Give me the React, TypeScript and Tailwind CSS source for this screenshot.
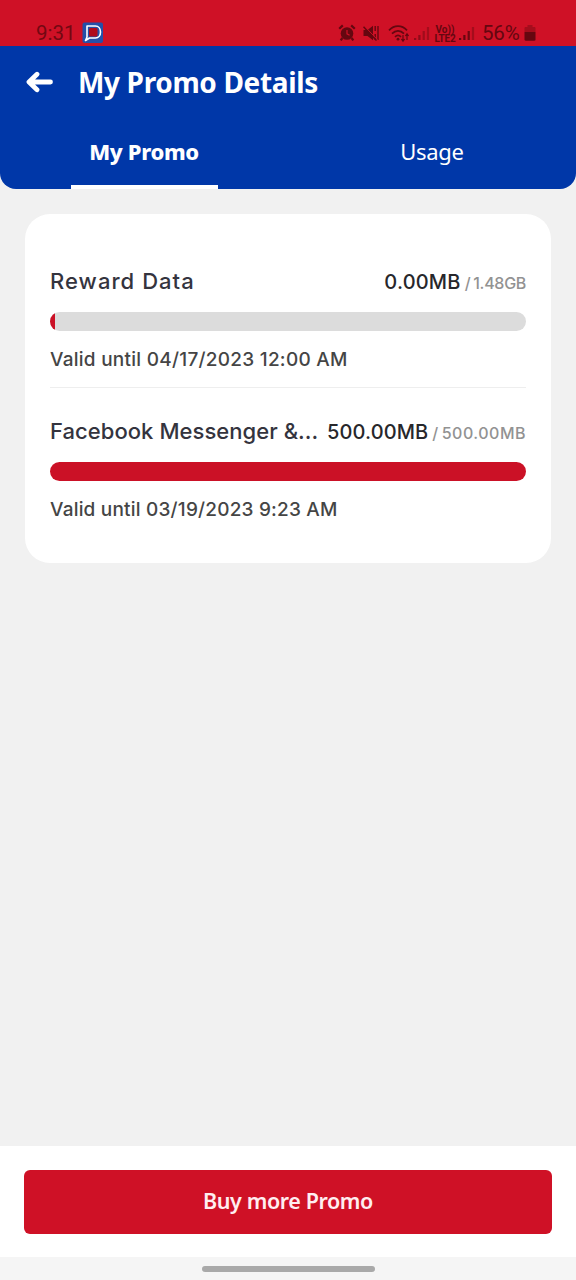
import { useState } from 'react';

type Promo = {
  name: string;
  used: string;
  total: string;
  percent: number;
  expiry: string;
  nameClass: string;
  usedClass: string;
  totalClass: string;
  expiryClass: string;
};

const promos: Promo[] = [
  {
    name: 'Reward Data',
    used: '0.00MB',
    total: '1.48GB',
    percent: 1.1,
    expiry: 'Valid until 04/17/2023 12:00 AM',
    nameClass: 'tracking-[1.05px]',
    usedClass: 'tracking-[0.2px]',
    totalClass: 'tracking-[-0.3px]',
    expiryClass: 'tracking-[0.26px]',
  },
  {
    name: 'Facebook Messenger &...',
    used: '500.00MB',
    total: '500.00MB',
    percent: 100,
    expiry: 'Valid until 03/19/2023 9:23 AM',
    nameClass: 'tracking-[0.05px]',
    usedClass: 'tracking-[0.1px]',
    totalClass: 'tracking-[0.5px]',
    expiryClass: 'tracking-[0.2px]',
  },
];

function AlarmIcon() {
  return (
    <svg width="18" height="18" viewBox="0 0 18 18" fill="currentColor">
      <circle cx="9" cy="9.5" r="6.3" />
      <path d="M1.2 4.8 4.8 1.4M16.8 4.8l-3.6-3.4M4.4 14l-1.7 2.4M13.6 14l1.7 2.4" stroke="currentColor" strokeWidth="2.2" />
      <path d="M9 6v3.8l2.6 1.4" fill="none" stroke="#cf1126" strokeWidth="1.2" />
    </svg>
  );
}

function MuteIcon() {
  return (
    <svg width="18" height="18" viewBox="0 0 18 18" fill="currentColor">
      <path d="M1.5 6h4L11 1.8v14.4L5.5 12h-4z" />
      <path d="M13.2 2v5M13.2 10v6M16 2v14" fill="none" stroke="currentColor" strokeWidth="1.4" />
      <path d="m2.5 2.2 13 13.6" stroke="#cf1126" strokeWidth="1" />
      <path d="m1.5 2.8 13 13.6" stroke="currentColor" strokeWidth="1.5" />
    </svg>
  );
}

function WifiIcon() {
  return (
    <svg width="22" height="19" viewBox="0 0 22 19" fill="none" stroke="currentColor" strokeWidth="1.7">
      <path d="M1 6.3C6.2.8 13.8.8 19 6.3M4 9.7c3.6-3.8 8.4-3.8 12 0M7 12.8c1.8-1.8 4.2-1.8 6 0" />
      <circle cx="10" cy="15.2" r="1.4" fill="currentColor" stroke="none" />
      <path d="M15 11v6M19 16v-6M13.4 15l1.6 2.2 1.6-2.2M17.4 12 19 9.8l1.6 2.2" strokeWidth="1.2" />
    </svg>
  );
}

function SignalIcon({ dim }: { dim?: boolean }) {
  return (
    <svg width="16" height="16" viewBox="0 0 16 16" fill="currentColor">
      <path d="M0 13h2.2v2H0zM4.3 10h2.2v5H4.3z" opacity={dim ? 0.6 : 1} />
      <path d="M8.6 6h2.2v9H8.6z" opacity={dim ? 0.45 : 0.9} />
      <path d="M12.9 2h2.2v13h-2.2z" opacity="0.4" />
    </svg>
  );
}

function StatusBar() {
  return (
    <div className="flex h-[46px] items-start bg-[#cf1126] pl-9 pt-[22px] font-[Roboto,sans-serif] text-[#730812]">
      <span className="w-[46px] text-[20.5px] leading-[22px]">9:31</span>
      <svg width="22" height="22" viewBox="0 0 22 22">
        <rect x="0.5" y="0.5" width="20.5" height="20.5" rx="2" fill="#2450a8" />
        <path d="M5 4h8.500c3 0 5 2.500 5 6s-2 6-5 6H7.500l-4 2.500L5 15z" fill="#2450a8" stroke="#fff" strokeWidth="1.6" strokeLinejoin="round" />
        <rect x="7" y="6" width="8.500" height="8.500" rx="1.500" fill="#b00a1c" />
      </svg>
      <div className="ml-[234px] flex items-start text-[#650710]">
        <div className="pt-[2px]"><AlarmIcon /></div>
        <div className="ml-1.5 pt-[2px]"><MuteIcon /></div>
        <div className="ml-2 pt-[2px]"><WifiIcon /></div>
        <div className="ml-1 pt-[3px]"><SignalIcon dim /></div>
        <div className="ml-[3px] flex w-6 flex-col items-center pt-[3px] text-[10px] font-bold leading-[9px]">
          <span>Vo))</span>
          <span className="tracking-[-0.2px]">LTE2</span>
        </div>
        <div className="ml-0.5 pt-[3px]"><SignalIcon /></div>
        <span className="ml-[7px] w-[42px] text-[20.5px] leading-[22px] tracking-[-0.2px]">56%</span>
        <svg className="mt-[3px]" width="12" height="16" viewBox="0 0 12 16" fill="currentColor">
          <path d="M3.5 0h5v2h1.8c.8 0 1.2.5 1.2 1.2V7H.5V3.2C.5 2.5.9 2 1.7 2h1.8z" opacity="0.4" />
          <path d="M.5 7h11v7.5c0 .8-.5 1.2-1.2 1.2H1.7c-.8 0-1.2-.5-1.2-1.2z" />
        </svg>
      </div>
    </div>
  );
}

function PromoRow({ promo }: { promo: Promo }) {
  return (
    <div className="h-[150px]">
      <div className="flex h-[29px] items-center justify-between whitespace-nowrap">
        <span className={`text-[22px] font-medium text-[#34343e] ${promo.nameClass}`}>{promo.name}</span>
        <span className="flex items-baseline font-medium">
          <span className={`text-[20px] text-[#27272b] ${promo.usedClass}`}>{promo.used}</span>
          <span className={`ml-1 text-[16px] text-[#929292] ${promo.totalClass}`}>
            /<span className="ml-[3px]">{promo.total}</span>
          </span>
        </span>
      </div>
      <div className="mt-4 h-[19px] overflow-hidden rounded-full bg-[#dcdcdc]">
        <div className="h-full bg-[#cb1126]" style={{ width: `${promo.percent}%` }} />
      </div>
      <p className={`mt-[15px] text-[19px] font-medium leading-[28px] text-[#454545] ${promo.expiryClass}`}>{promo.expiry}</p>
    </div>
  );
}

export default function App() {
  const [tab, setTab] = useState('promo');

  return (
    <div className="flex h-[1280px] w-[576px] flex-col bg-[#f1f1f1] font-[Inter,sans-serif]">
      <StatusBar />

      <header className="h-[143px] rounded-b-[16px] bg-[#0037a8] font-['Noto_Sans',sans-serif] text-white">
        <div className="flex h-[71px] items-center pl-[26px]">
          <svg width="28" height="24" viewBox="0 0 28 24" fill="none" stroke="currentColor" strokeWidth="4.8" strokeLinecap="round" strokeLinejoin="round">
            <path d="M11 4.2 3 12l8 7.800M4 12h20.500" />
          </svg>
          <h1 className="ml-[24px] whitespace-nowrap text-[28px] font-bold tracking-[-0.35px]">My Promo Details</h1>
        </div>
        <div className="flex h-[72px]">
          <button onClick={() => setTab('promo')} className="flex w-1/2 flex-col items-center justify-between">
            <span className="pt-[17px] text-[22px] font-extrabold leading-[34px] tracking-[-0.35px]">My Promo</span>
            {tab === 'promo' && <span className="h-[4px] w-[147px] bg-white" />}
          </button>
          <button onClick={() => setTab('usage')} className="flex w-1/2 flex-col items-center justify-between">
            <span className="pt-[17px] text-[22px] leading-[34px] tracking-[-0.3px]">Usage</span>
            {tab === 'usage' && <span className="h-[4px] w-[147px] bg-white" />}
          </button>
        </div>
      </header>

      <main className="flex-1 px-[25px] pt-[25px]">
        <section className="h-[349px] rounded-[25px] bg-white px-[25px] pt-[53px]">
          <PromoRow promo={promos[0]} />
          <div className="-mt-[30px] mb-[29px] h-px bg-[#eeeeee]" />
          <PromoRow promo={promos[1]} />
        </section>
      </main>

      <footer className="h-[111px] bg-white px-6 pt-6">
        <button className="h-16 w-full rounded-md bg-[#cf1126] pb-0.5 font-['Noto_Sans',sans-serif] text-[21.500px] font-semibold tracking-[-0.4px] text-[#ffeef0]">
          Buy more Promo
        </button>
      </footer>
      <div className="flex h-[23px] justify-center bg-[#f5f5f5] pt-[9px]">
        <div className="h-[6px] w-[173px] rounded-full bg-[#a9a9a9]" />
      </div>
    </div>
  );
}
